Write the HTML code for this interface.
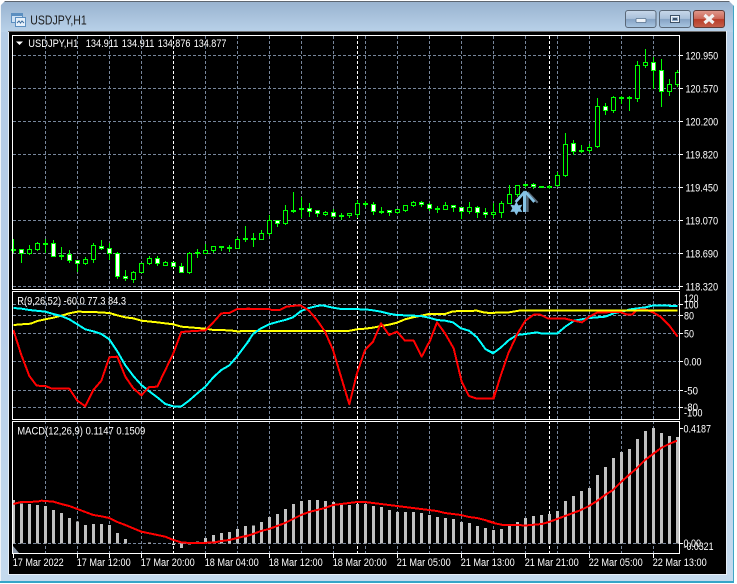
<!DOCTYPE html>
<html><head><meta charset="utf-8"><title>USDJPY,H1</title>
<style>
html,body{margin:0;padding:0;background:#fff;width:737px;height:584px;overflow:hidden}
svg{display:block}
text{font-family:"Liberation Sans",sans-serif;font-size:11px;fill:#fff}
.c{shape-rendering:crispEdges}
.l{fill:none;stroke-width:6;stroke-linejoin:round}
.r{stroke:#f00}.y{stroke:#ff0}.a{stroke:#0ff}
.bar{fill:none;stroke:#c0c0c0;stroke-width:9}
</style></head><body>
<svg xmlns="http://www.w3.org/2000/svg" width="737" height="584" viewBox="0 0 737 584">
<defs>
<linearGradient id="tb" x1="0" y1="0" x2="0" y2="1"><stop offset="0" stop-color="#98b2cf"/><stop offset="1" stop-color="#b9d1e9"/></linearGradient>
<linearGradient id="fr" x1="0" y1="0" x2="0" y2="1"><stop offset="0" stop-color="#b4cce6"/><stop offset=".5" stop-color="#b6cde8"/><stop offset="1" stop-color="#c4daee"/></linearGradient>
<linearGradient id="bt" x1="0" y1="0" x2="0" y2="1"><stop offset="0" stop-color="#c8d8ea"/><stop offset=".48" stop-color="#a9c0da"/><stop offset=".52" stop-color="#86a3c4"/><stop offset="1" stop-color="#a9c6e2"/></linearGradient>
<linearGradient id="cl" x1="0" y1="0" x2="0" y2="1"><stop offset="0" stop-color="#e0998c"/><stop offset=".48" stop-color="#cc6a5a"/><stop offset=".52" stop-color="#b83c28"/><stop offset="1" stop-color="#c4604c"/></linearGradient>
</defs>
<!-- window frame -->
<rect x="0" y="1" width="734" height="582" rx="3" fill="url(#fr)"/>
<rect x="0" y="1" width="734" height="31" fill="url(#tb)"/>
<path class="c" d="M0 1.5H734" stroke="#5e6670" fill="none"/>
<path class="c" d="M.5 2V582" stroke="#eef3f8" fill="none"/>
<path class="c" d="M733.5 3V582" stroke="#3ea6c6" fill="none"/>
<path class="c" d="M0 582H734" stroke="#35a5c8" stroke-width="2" fill="none"/>
<path d="M0 6V1h5z" fill="#fff"/><path d="M734 6V1h-5z" fill="#fff"/>
<rect class="c" x="8" y="31" width="719" height="544" fill="#e6eff8"/>
<rect class="c" x="8" y="31" width="718" height="1" fill="#6e6e6e"/>
<rect class="c" x="9" y="32" width="717" height="542" fill="#000"/>
<!-- title icon -->
<rect class="c" x="11.5" y="13.5" width="11" height="9" fill="#cfe2f5" stroke="#5c8fc0"/>
<rect class="c" x="15.5" y="17.5" width="10" height="9" fill="#e6f0fa" stroke="#5c8fc0"/>
<rect class="c" x="12" y="14" width="10" height="2" fill="#5c8fc0"/>
<path d="M17 23l2-2 1.5 2 1.500-2 2 2" fill="none" stroke="#3c6c9c" stroke-width="1"/>
<text x="30.300" y="24.500" style="font-size:12.500px;fill:#1c1c1c" textLength="56.400" lengthAdjust="spacingAndGlyphs">USDJPY,H1</text>
<!-- window buttons -->
<rect x="625.500" y="10.500" width="30.500" height="17" rx="2.500" fill="url(#bt)" stroke="#5a6878"/>
<rect x="659.500" y="10.500" width="31" height="17" rx="2.500" fill="url(#bt)" stroke="#5a6878"/>
<rect x="693.500" y="10.500" width="31" height="17" rx="2.500" fill="url(#cl)" stroke="#5e3a36"/>
<rect x="636" y="18.500" width="10" height="4" rx="1" fill="#eef3f8" stroke="#56708c" stroke-width=".8"/>
<rect x="670.500" y="15.500" width="9" height="7" fill="none" stroke="#3e5268" stroke-width="1"/><rect x="671.500" y="16.500" width="7" height="5" fill="none" stroke="#eef3f8" stroke-width="1"/><rect x="673" y="18" width="4" height="2" fill="#3e5268"/>
<path d="M704.500 15l9 8M713.500 15l-9 8" stroke="#f2f2f2" stroke-width="3.200" fill="none"/>
<!-- grid -->
<g class="c" fill="none" stroke="#77869b" stroke-dasharray="3 2">
<path d="M13 55.500H679M13 88.500H679M13 121.500H679M13 154.500H679M13 187.500H679M13 220.500H679M13 253.500H679M13 286.500H679"/>
<path d="M13 304.500H679M13 315.500H679M13 333.500H679M13 361.500H679M13 390.500H679M13 407.500H679M13 543.500H679"/>
<path d="M45.500 36V553M77.500 36V553M109.500 36V553M141.500 36V553M205.500 36V553M237.500 36V553M269.500 36V553M301.500 36V553M333.500 36V553M365.500 36V553M397.500 36V553M429.500 36V553M461.500 36V553M493.500 36V553M525.500 36V553M557.500 36V553M589.500 36V553M621.500 36V553M653.500 36V553"/>
</g>
<path class="c" d="M173.500 36V553M357.500 36V553M549.500 36V553" fill="none" stroke="#fff" stroke-dasharray="3 2"/>
<!-- candle wicks -->
<path class="c" fill="none" stroke="#0f0" d="M13.500 239V253M21.500 250V263M29.500 245V255M37.500 242V251M45.500 239V253M53.500 240V257M61.500 247V260M69.500 250V263M77.500 260V272M85.500 257V265M93.500 243V263M101.500 240V250M109.500 243V260M117.500 252V279M125.500 270V281M133.500 271V283M141.500 263V273M149.500 256V265M157.500 256V266M165.500 261V266M173.500 262V267M181.500 263V273M189.500 252V274M197.500 249V258M205.500 244V254M213.500 246V253M221.500 246V251M229.500 245V252M237.500 237V249M245.500 226V242M253.500 233V247M261.500 230V240M269.500 215V236M277.500 220V227M285.500 205V225M293.500 192V213M301.500 197V218M309.500 203V217M317.500 210V217M325.500 211V216M333.500 209V218M341.500 213V220M349.500 213V218M357.500 200V218M365.500 201V207M373.500 202V215M381.500 207V214M389.500 210V216M397.500 209V214M405.500 205V212M413.500 201V207M421.500 201V207M429.500 203V211M437.500 206V213M445.500 202V210M453.500 205V212M461.500 207V219M469.500 202V214M477.500 206V218M485.500 208V218M493.500 203V218M501.500 201V218M509.500 185V204M517.500 185V197M525.500 184V188M533.500 183V189M541.500 186V188M549.500 185V189M557.500 172V187M565.500 133V177M573.500 140V155M581.500 145V153M589.500 144V153M597.500 98V148M605.500 103V115M613.500 96V113M621.500 96V104M629.500 96V111M637.500 61V102M645.500 49V68M653.500 57V89M661.500 59V107M669.500 79V96M677.500 70V87"/>
<!-- black bodies -->
<path class="c" fill="#000" stroke="#0f0" d="M27.500 249.500h4v4h-4zM35.500 243.500h4v6h-4zM83.500 259.500h4v4h-4zM91.500 245.500h4v14h-4zM131.500 272.500h4v7h-4zM139.500 263.500h4v9h-4zM147.500 258.500h4v5h-4zM163.500 262.500h4v3h-4zM187.500 253.500h4v19h-4zM203.500 250.500h4v3h-4zM211.500 246.500h4v4h-4zM235.500 239.500h4v9h-4zM259.500 233.500h4v6h-4zM267.500 220.500h4v13h-4zM283.500 210.500h4v13h-4zM323.500 212.500h4v2h-4zM347.500 213.500h4v2h-4zM355.500 203.500h4v11h-4zM395.500 209.500h4v3h-4zM403.500 205.500h4v5h-4zM411.500 202.500h4v3h-4zM443.500 205.500h4v4h-4zM467.500 207.500h4v4h-4zM491.500 212.500h4v2h-4zM499.500 203.500h4v9h-4zM507.500 194.500h4v9h-4zM515.500 185.500h4v9h-4zM555.500 175.500h4v10h-4zM563.500 144.500h4v31h-4zM587.500 147.500h4v3h-4zM595.500 106.500h4v40h-4zM611.500 97.500h4v13h-4zM635.500 65.500h4v33h-4zM643.500 62.500h4v3h-4zM667.500 84.500h4v7h-4zM675.500 72.500h4v12h-4z"/>
<!-- white bodies -->
<path class="c" fill="#fff" stroke="#0f0" d="M19.500 249.500h4v4h-4zM51.500 243.500h4v13h-4zM67.500 254.500h4v6h-4zM75.500 260.500h4v3h-4zM99.500 246.500h4v2h-4zM107.500 248.500h4v5h-4zM115.500 253.500h4v23h-4zM123.500 276.500h4v2h-4zM155.500 258.500h4v5h-4zM171.500 262.500h4v4h-4zM179.500 266.500h4v6h-4zM275.500 220.500h4v3h-4zM307.500 208.500h4v3h-4zM315.500 210.500h4v3h-4zM331.500 212.500h4v4h-4zM371.500 204.500h4v7h-4zM387.500 210.500h4v2h-4zM419.500 202.500h4v2h-4zM427.500 204.500h4v4h-4zM451.500 205.500h4v2h-4zM459.500 207.500h4v4h-4zM475.500 207.500h4v5h-4zM483.500 212.500h4v2h-4zM531.500 184.500h4v2h-4zM571.500 143.500h4v8h-4zM603.500 106.500h4v4h-4zM651.500 62.500h4v8h-4zM659.500 70.500h4v21h-4z"/>
<!-- doji -->
<path class="c" fill="#0f0" d="M11 249h5v2h-5zM43 243h5v2h-5zM59 255h5v2h-5zM195 252h5v2h-5zM219 246h5v2h-5zM227 247h5v2h-5zM243 238h5v2h-5zM251 238h5v2h-5zM291 210h5v2h-5zM299 208h5v2h-5zM339 215h5v2h-5zM363 203h5v2h-5zM379 211h5v2h-5zM435 208h5v2h-5zM523 184h5v2h-5zM539 186h5v2h-5zM547 186h5v2h-5zM579 150h5v2h-5zM619 97h5v2h-5zM627 97h5v2h-5z"/>
<!-- arrow + star -->
<g transform="translate(487,130) scale(.33333)">
<path d="M122 186L152 218M122 190V246" fill="none" stroke="#5a6a78" stroke-width="6"/>
<path d="M114 184L86 216M114 184L142 216M113 186V246" fill="none" stroke="#86c3e6" stroke-width="8"/>
<path d="M113 186V246" fill="none" stroke="#86c3e6" stroke-width="10"/>
<path d="M88 214L94 226 106 224 100 235 106 246 94 245 88 256 82 245 70 246 76 235 70 224 82 226z" fill="#86c3e6"/>
</g>
<!-- RSI lines -->
<g transform="translate(0,290) scale(.33333)" class="l c">
<polyline class="l y" points="40,105 64,103 92,101 112,93 136,88 160,83 184,77 208,70 232,65 280,66 328,69 352,76 376,82 400,85 424,92 472,97 520,103 544,110 568,112 616,116 640,120 688,121 712,124 750,123"/>
<polyline class="l a" points="40,54 64,56 88,60 136,65 160,72 184,78 208,88 232,103 256,118 280,124 304,132 328,148 352,184 376,226 400,258 424,285 448,304 472,322 496,342 520,349 544,349 568,331 592,310 616,290 640,262 664,240 688,226 712,198 750,148"/>
<polyline class="l r" points="40,120 64,195 88,258 110,287 136,288 156,296 208,296 232,332 256,349 280,300 304,272 328,202 352,200 376,260 400,295 424,316 448,291 472,290 496,240 520,190 544,126 568,124 616,121 640,97 664,70 688,69 712,57 750,56"/>
</g>
<g transform="translate(245,290) scale(.33333)" class="l c">
<polyline class="l y" points="0,123 310,123 336,118 360,116 384,113 408,108 432,104 456,98 480,88 504,82 528,77 552,72 600,72 624,64 696,62 720,68 750,69"/>
<polyline class="l a" points="0,168 24,132 48,115 72,103 96,96 120,90 144,82 168,63 192,54 216,48 232,46 264,53 288,57 360,58 384,61 408,65 432,71 456,75 528,78 552,83 576,90 600,92 624,97 648,115 672,122 696,142 722,178 744,188"/>
<polyline class="l r" points="0,57 72,57 80,60 104,60 124,50 150,47 168,47 192,62 216,90 240,125 264,180 288,260 313,343 336,250 360,180 384,155 408,100 432,135 456,125 480,152 506,152 530,200 556,150 576,97 600,130 626,175 650,275 672,318 696,326 744,326 750,305"/>
</g>
<g transform="translate(487,290) scale(.33333)" class="l c">
<polyline class="l a" points="0,180 18,190 42,172 66,150 90,135 115,132 150,127 165,131 210,131 235,110 262,92 307,84 355,80 380,70 405,65 430,58 475,52 500,46 572,48"/>
<polyline class="l r" points="0,326 20,326 40,260 64,190 92,130 115,92 140,74 160,74 184,86 235,86 260,92 285,97 307,80 330,68 380,66 400,66 418,73 436,73 450,60 475,58 500,68 520,80 548,108 572,140"/>
<polyline class="l y" points="0,69 66,67 96,62 572,62"/>
</g>
<!-- MACD bars -->
<g transform="translate(0,420) scale(.33333)" class="c">
<path class="bar" d="M40.500 240V370M64.500 250V370M88.500 252V370M112.500 255V370M136.500 258V370M160.500 270V370M184.500 279V370M208.500 294V370M232.500 305V370M256.500 315V370M280.500 312V370M304.500 312V370M328.500 315V370M352.500 339V370M376.500 357V370M448.500 367V370M520.500 370V375M544.500 370V384M568.500 370V374M592.500 364V370M616.500 354V370M640.500 345V370M664.500 339V370M688.500 336V370M712.500 327V370M736.500 318V370M760.500 316V370M784.500 306V370M808.500 291V370M832.500 282V370M856.500 267V370M880.500 252V370M904.500 243V370M928.500 240V370M952.500 240V370M976.500 243V370M1000.500 246V370M1024.500 252V370M1048.500 255V370M1072.500 252V370M1096.500 252V370M1120.500 258V370M1144.500 261V370M1168.500 270V370M1192.500 276V370M1216.500 276V370M1240.500 276V370M1264.500 279V370M1288.500 285V370M1312.500 291V370M1336.500 294V370M1360.500 297V370M1384.500 306V370M1408.500 309V370M1432.500 318V370M1456.500 324V370M1480.500 330V370M1504.500 327V370M1528.500 317V370M1552.500 306V370M1576.500 294V370M1600.500 288V370M1624.500 285V370M1648.500 282V370M1672.500 273V370M1696.500 243V370M1720.500 228V370M1744.500 213V370M1768.500 204V370M1792.500 165V370M1816.500 141V370M1840.500 114V370M1864.500 96V370M1888.500 87V370M1912.500 57V370M1936.500 33V370M1960.500 24V370M1984.500 39V370M2008.500 48V370M2032.500 51V370"/>
</g>
<!-- MACD signal -->
<g transform="translate(0,420) scale(.33333)" class="c"><polyline class="l r" points="40,252 64,246 112,245 124,242 160,245 184,252 208,258 232,267 256,276 280,285 304,289 328,294 352,306 376,315 400,325 424,335 448,340 472,345 496,350 520,360 544,367 568,369 640,368 664,363 688,360 712,354 750,345"/></g>
<g transform="translate(245,420) scale(.33333)" class="c"><polyline class="l r" points="0,350 24,342 48,333 72,327 96,318 120,309 144,297 168,285 192,276 216,270 240,264 264,255 288,252 312,249 336,246 360,246 384,249 408,252 432,255 456,258 480,261 504,264 552,270 576,273 600,279 624,282 648,285 672,291 696,294 720,300 750,309"/></g>
<g transform="translate(487,420) scale(.33333)" class="c"><polyline class="l r" points="0,303 24,310 48,315 120,316 165,312 186,306 210,297 234,288 258,279 282,270 306,258 330,243 354,225 378,210 402,186 426,165 450,144 474,120 498,102 522,84 546,72 570,62"/></g>
<!-- pane borders -->
<g class="c" fill="none" stroke="#fff">
<rect x="12.500" y="35.500" width="667" height="254"/>
<rect x="12.500" y="291.500" width="667" height="128"/>
<rect x="12.500" y="421.500" width="667" height="132"/>
<path d="M680 55.500h3M680 88.500h3M680 121.500h3M680 154.500h3M680 187.500h3M680 220.500h3M680 253.500h3M680 286.500h3M680 304.500h3M680 315.500h3M680 333.500h3M680 361.500h3M680 390.500h3M680 407.500h3M680 428.500h3M680 543.500h3"/>
<path d="M13.500 554v4M77.500 554v4M109.500 554v4M141.500 554v4M205.500 554v4M269.500 554v4M333.500 554v4M397.500 554v4M461.500 554v4M525.500 554v4M589.500 554v4M653.500 554v4"/>
</g>
<path d="M13 546l6 7h-6z" fill="#8c98a8"/>
<!-- header text -->
<path d="M16 41.500h7l-3.500 3.500z" fill="#fff"/>
<text x="28.300" y="47" textLength="50" lengthAdjust="spacingAndGlyphs">USDJPY,H1</text>
<text x="85.700" y="47" textLength="32.700" lengthAdjust="spacingAndGlyphs">134.911</text>
<text x="121.700" y="47" textLength="32.700" lengthAdjust="spacingAndGlyphs">134.911</text>
<text x="157.700" y="47" textLength="32.700" lengthAdjust="spacingAndGlyphs">134.876</text>
<text x="193.700" y="47" textLength="32.700" lengthAdjust="spacingAndGlyphs">134.877</text>
<text x="17.300" y="304.500" textLength="108.700" lengthAdjust="spacingAndGlyphs">R(9,26,52) -60.0 77.3 84.3</text>
<text x="17.300" y="434.500" textLength="128" lengthAdjust="spacingAndGlyphs">MACD(12,26,9) 0.1147 0.1509</text>
<!-- price labels -->
<g>
<text x="685.500" y="59.500" textLength="32.700" lengthAdjust="spacingAndGlyphs">120.950</text>
<text x="685.500" y="92.500" textLength="32.700" lengthAdjust="spacingAndGlyphs">120.570</text>
<text x="685.500" y="125.500" textLength="32.700" lengthAdjust="spacingAndGlyphs">120.200</text>
<text x="685.500" y="158.500" textLength="32.700" lengthAdjust="spacingAndGlyphs">119.820</text>
<text x="685.500" y="191.500" textLength="32.700" lengthAdjust="spacingAndGlyphs">119.450</text>
<text x="685.500" y="224.500" textLength="32.700" lengthAdjust="spacingAndGlyphs">119.070</text>
<text x="685.500" y="257.500" textLength="32.700" lengthAdjust="spacingAndGlyphs">118.690</text>
<text x="685.500" y="290.500" textLength="32.700" lengthAdjust="spacingAndGlyphs">118.320</text>
<text x="684" y="302" textLength="14.500" lengthAdjust="spacingAndGlyphs">120</text>
<text x="684" y="308.500" textLength="14.500" lengthAdjust="spacingAndGlyphs">100</text>
<text x="684" y="319.500" textLength="10" lengthAdjust="spacingAndGlyphs">80</text>
<text x="684" y="337.500" textLength="10" lengthAdjust="spacingAndGlyphs">50</text>
<text x="684" y="365.500" textLength="17.500" lengthAdjust="spacingAndGlyphs">0.00</text>
<text x="684" y="394.500" textLength="14" lengthAdjust="spacingAndGlyphs">-50</text>
<text x="684" y="411" textLength="14" lengthAdjust="spacingAndGlyphs">-80</text>
<text x="684" y="416.500" textLength="18.500" lengthAdjust="spacingAndGlyphs">-100</text>
<text x="683.500" y="432.500" textLength="27.500" lengthAdjust="spacingAndGlyphs">0.4187</text>
<text x="683.500" y="547" textLength="17.500" lengthAdjust="spacingAndGlyphs">0.00</text>
<text x="683.500" y="550" textLength="30" lengthAdjust="spacingAndGlyphs">-0.0321</text>
</g>
<!-- time labels -->
<g>
<text x="12.700" y="566" textLength="51" lengthAdjust="spacingAndGlyphs">17 Mar 2022</text>
<text x="76.700" y="566" textLength="54" lengthAdjust="spacingAndGlyphs">17 Mar 12:00</text>
<text x="140.700" y="566" textLength="54" lengthAdjust="spacingAndGlyphs">17 Mar 20:00</text>
<text x="204.700" y="566" textLength="54" lengthAdjust="spacingAndGlyphs">18 Mar 04:00</text>
<text x="268.700" y="566" textLength="54" lengthAdjust="spacingAndGlyphs">18 Mar 12:00</text>
<text x="332.700" y="566" textLength="54" lengthAdjust="spacingAndGlyphs">18 Mar 20:00</text>
<text x="396.700" y="566" textLength="54" lengthAdjust="spacingAndGlyphs">21 Mar 05:00</text>
<text x="460.700" y="566" textLength="54" lengthAdjust="spacingAndGlyphs">21 Mar 13:00</text>
<text x="524.700" y="566" textLength="54" lengthAdjust="spacingAndGlyphs">21 Mar 21:00</text>
<text x="588.700" y="566" textLength="54" lengthAdjust="spacingAndGlyphs">22 Mar 05:00</text>
<text x="652.700" y="566" textLength="54" lengthAdjust="spacingAndGlyphs">22 Mar 13:00</text>
</g>
</svg>
</body></html>
